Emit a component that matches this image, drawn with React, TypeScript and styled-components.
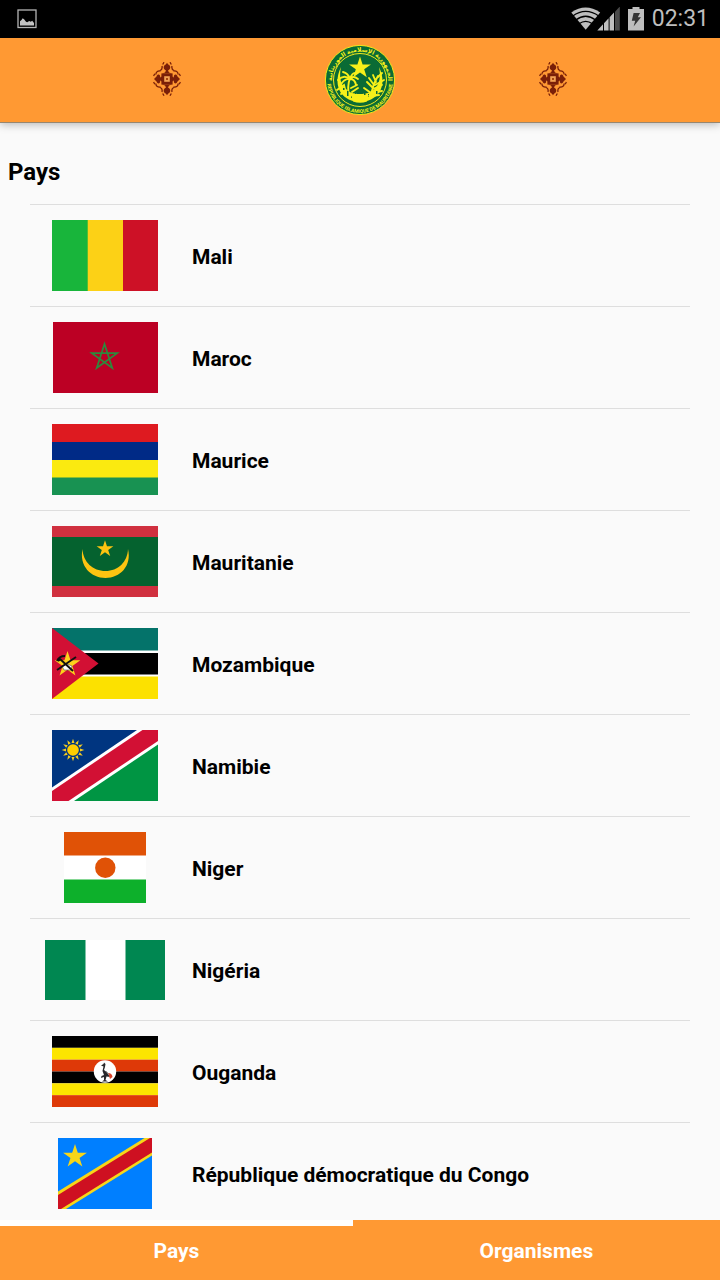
import React, { useState } from 'react';
import styled, { createGlobalStyle } from 'styled-components';

const GlobalStyle = createGlobalStyle`
  * { box-sizing: border-box; }
  body {
    margin: 0;
    background: #fafafa;
    color: #000;
    font-family: Roboto, "Noto Sans", sans-serif;
  }
`;

const Screen = styled.div`
  display: flex;
  flex-direction: column;
  height: 100vh;
`;

const StatusBar = styled.div`
  display: flex;
  flex: none;
  align-items: center;
  justify-content: space-between;
  height: 38px;
  padding: 0 11px 0 16px;
  background: #000;
  color: #bebebe;
`;

const StatusGroup = styled.div`
  display: flex;
  align-items: center;
  gap: 8px;
`;

const Clock = styled.time`
  font-size: 23px;
  line-height: 38px;
`;

const Header = styled.header`
  display: grid;
  flex: none;
  grid-template-columns: repeat(3, 1fr);
  align-items: center;
  justify-items: center;
  height: 85px;
  padding: 0 70px;
  background: #ff9933;
  border-bottom: 1px solid #97866f;
  box-shadow: 0 2px 8px rgba(0, 0, 0, 0.25);
  z-index: 1;
`;

const Content = styled.main`
  flex: 1;
  min-height: 0;
  overflow-y: auto;
  scrollbar-width: none;
`;

const Title = styled.h1`
  margin: 0;
  padding: 33px 8px 16px;
  font-size: 24px;
  line-height: 32px;
  font-weight: 700;
`;

const CountryList = styled.ul`
  margin: 0;
  padding: 0 30px;
  list-style: none;
`;

const CountryRow = styled.li`
  display: flex;
  align-items: center;
  gap: 26px;
  height: 102px;
  padding: 0 15px;
  border-top: 1px solid #dedede;
`;

const FlagSlot = styled.div`
  display: flex;
  flex: none;
  justify-content: center;
  width: 120px;
`;

const CountryName = styled.span`
  padding: 2px 0 0 1px;
  font-size: 21px;
  line-height: 28px;
  font-weight: 700;
`;

const Tabs = styled.nav`
  display: flex;
  flex: none;
  background: #ff9933;
`;

const Tab = styled.button<{ $active: boolean; $grow: number }>`
  flex: ${(p) => p.$grow} 1 0;
  height: 60px;
  padding: 0 0 4px;
  border: 0;
  border-top: 6px solid ${(p) => (p.$active ? '#fff' : '#ff9933')};
  background: #ff9933;
  color: #fff;
  font: 700 21px/28px Roboto, "Noto Sans", sans-serif;
  cursor: pointer;
`;

const Drawing = styled.svg`
  display: block;
  flex: none;
`;

const starPoints = (cx: number, cy: number, r: number, inner = 0.382) =>
  Array.from({ length: 10 }, (_, i) => {
    const a = (i * Math.PI) / 5 - Math.PI / 2;
    const d = i % 2 ? r * inner : r;
    return `${(cx + d * Math.cos(a)).toFixed(2)},${(cy + d * Math.sin(a)).toFixed(2)}`;
  }).join(' ');

const PictureIcon = () => (
  <Drawing width="22" height="22" viewBox="0 0 22 22" aria-hidden="true">
    <rect x="2" y="2" width="18" height="17.5" fill="none" stroke="#b4b4b4" strokeWidth="1.3" />
    <path d="M4 17.5v-4.2l1.5-1.2 1.2-1.8 1.6 1.2 1.7 2.2 1.2.6 2-1.2 1.6.6 1.4-1 1.8 2.4v2.4z" fill="#c4c4c4" />
  </Drawing>
);

const NetworkIcon = () => (
  <Drawing width="49" height="24" viewBox="0 0 49 24" aria-hidden="true">
    <path d="M.3 5.400Q14.500-4.400 29.200 5.400L14.700 22.800z" fill="#bebebe" />
    <g fill="none" stroke="#000" strokeWidth="1.400">
      <path d="M1.500 9.200Q14.700-.4 28 9.200" />
      <path d="M4.800 13Q14.700 5.400 24.600 13" />
      <path d="M8 16.800Q14.700 12 21.400 16.800" />
    </g>
    <path d="M26.300 23.500 32 17.300V23.500zM33 23.500v-7.300l4.600-5V23.500zM38.600 23.500V10.200l4.400-4.800v18.100z" fill="#bebebe" />
    <path d="M44 23.500V4.800L48.800-.5v24z" fill="#4b4b4b" />
  </Drawing>
);

const BatteryIcon = () => (
  <Drawing width="16" height="24" viewBox="0 0 16 24" aria-hidden="true">
    <path d="M4.500 0h7v2H16V23.500H0V2h4.500z" fill="#bebebe" />
    <path d="M5.600 6H12L9.800 10.300H13L5.600 19.400 7.200 13.800H3.800z" fill="#333" />
  </Drawing>
);

const Ornament = () => (
  <Drawing width="30" height="36" viewBox="-15 -18 30 36" aria-hidden="true">
    <g fill="#7a1f08" stroke="#7a1f08">
      {[0, 180].map((r) => (
        <g key={r} transform={`translate(0 -1) rotate(${r})`}>
          <path d="M-5-5.500-2-6.500-1-8.500C-4.500-10-3.500-14-1.200-14.500L0-16.300 1.200-14.500C3.500-14 4.500-10 1-8.500L2-6.500 5-5.500z" stroke="none" />
          <path d="M-3-16.800-4.300-14.500M3-16.800 4.300-14.500M-5-13C-4.500-10.500-5.500-9-7-8.500M5-13C4.500-10.500 5.500-9 7-8.500" fill="none" strokeWidth="1.300" />
        </g>
      ))}
      {[90, 270].map((r) => (
        <g key={r} transform={`translate(0 -1) rotate(${r})`}>
          <path d="M-2.500-5-1.500-6.800C-5-6.500-5.500-9.500-2.500-10.500L0-13 2.500-10.500C5.500-9.500 5-6.500 1.500-6.800L2.500-5z" stroke="none" />
          <path d="M-3-13.400-5.200-12.200M3-13.400 5.200-12.200M-4.500-11.200C-7.500-11-8.500-9-8-6.500M4.500-11.200C7.500-11 8.500-9 8-6.500" fill="none" strokeWidth="1.300" />
        </g>
      ))}
    </g>
    <rect x="-4.200" y="-5.200" width="8.400" height="8.400" fill="#f2a154" stroke="#7a1f08" strokeWidth="2.800" />
    <rect x="-1" y="-2" width="2" height="2" fill="#a8480f" />
  </Drawing>
);

const SealText = styled.text`
  fill: #f6f01a;
  font-family: Roboto, "DejaVu Sans", sans-serif;
  font-weight: 700;
`;

const Emblem = () => (
  <Drawing width="72" height="72" viewBox="0 0 72 72" role="img" aria-label="République Islamique de Mauritanie">
    <defs>
      <path id="seal-top" d="M10 46A28 28 0 1 1 62 46" />
      <path id="seal-bottom" d="M4.100 27.500A33 33 0 1 0 67.900 27.500" />
    </defs>
    <circle cx="36" cy="36" r="34.600" fill="#0a6b35" stroke="#f0e81c" strokeWidth="1" />
    <SealText fontSize="6" textAnchor="middle">
      <textPath href="#seal-top" startOffset="50%">الجمهورية الإسلامية الموريتانية</textPath>
    </SealText>
    <SealText fontSize="5" textAnchor="middle">
      <textPath href="#seal-bottom" startOffset="50%">REPUBLIQUE ISLAMIQUE DE MAURITANIE</textPath>
    </SealText>
    <circle cx="36" cy="36" r="26.500" fill="none" stroke="#f0e81c" strokeWidth="1" />
    <path d="M17 23C7 44 20 58 36 58S65 44 55 23C59 42 49 50 36 50S13 42 17 23z" fill="#f6f01a" />
    <polygon points={starPoints(36, 24, 11.500)} fill="#f6f01a" />
    <g fill="none" stroke="#f6f01a" strokeWidth="1.900" strokeLinecap="round">
      <path d="M25 52Q23 42 26 34M26 35Q20 30 14 36M26 35Q20 34 16 42M26 35Q29 31 34 35M26 35Q31 35 32 41M26 35Q24 29 19 28M26 35Q28 29 31 29M13 46 20 41 22 49M27 44 33 41M28 48 34 44M17 50 22 46" />
      <path d="M47 53Q48 42 54 32M49 44 43 38M50 41 45 34M52 38 49 31M49 45 58 41M51 41 60 36M48 49 58 47M47 49 40 44M54 33 58 29M47 52 55 51" />
    </g>
    <g fill="#0a6b35">
      <path d="M23 47h1.500v5H23zM31 47h1v3h-1zM40 48h1.500v3H40zM44 50h1v3h-1zM19 44h1.500v2H19zM52 47h1.500v3H52zM27 52h1v2h-1z" />
    </g>
    <path d="M27 51Q36 54 45 51L43 57.500Q36 60 29 57.500z" fill="#f6f01a" />
  </Drawing>
);

type FlagProps = { width?: number; height?: number; label: string; children: React.ReactNode };

const Flag = ({ width = 106, height = 71, label, children }: FlagProps) => (
  <Drawing width={width} height={height} viewBox={`0 0 ${width} ${height}`} role="img" aria-label={`Drapeau : ${label}`}>
    {children}
  </Drawing>
);

const MaliFlag = () => (
  <Flag label="Mali">
    <rect width="106" height="71" fill="#fcd116" />
    <rect width="35.700" height="71" fill="#18b53b" />
    <rect x="71" width="35" height="71" fill="#cd1126" />
  </Flag>
);

const MarocFlag = () => (
  <Flag width={105} label="Maroc">
    <rect width="105" height="71" fill="#bc0024" />
    <path d="M51.500 22 59.300 46 38.800 31.200H64.200L43.700 46z" fill="none" stroke="#2c8a3c" strokeWidth="1.700" />
  </Flag>
);

const MauriceFlag = () => (
  <Flag label="Maurice">
    <rect width="106" height="18" fill="#de1a20" />
    <rect y="18" width="106" height="18" fill="#002a86" />
    <rect y="36" width="106" height="18" fill="#faea10" />
    <rect y="53.500" width="106" height="17.500" fill="#189252" />
  </Flag>
);

const MauritanieFlag = () => (
  <Flag label="Mauritanie">
    <rect width="106" height="71" fill="#d0303f" />
    <rect y="11" width="106" height="49" fill="#05622f" />
    <path d="M30.500 23C27 40 39 52 53.500 52S80 40 76 23C75.500 36 66 45 53.500 45S31 36 30.500 23z" fill="#fdc411" />
    <polygon points={starPoints(53, 23, 8.800)} fill="#fdc411" />
  </Flag>
);

const MozambiqueFlag = () => (
  <Flag label="Mozambique">
    <rect width="106" height="71" fill="#fff" />
    <rect width="106" height="22.500" fill="#04736a" />
    <rect y="25" width="106" height="21.500" fill="#000" />
    <rect y="48.500" width="106" height="22.500" fill="#fce100" />
    <path d="M0 0 46.500 35.500 0 71z" fill="#d21034" />
    <polygon points={starPoints(15.500, 36.500, 13.500)} fill="#fcd21c" />
    <path d="M10 38 15 36 20 38 19 42 12 42z" fill="#fff" stroke="#555" strokeWidth=".6" />
    <path d="M5 42 24 29M8 31 21 43M5 33Q7 28 13 28M6 33 9 31" fill="none" stroke="#111" strokeWidth="1.900" />
  </Flag>
);

const NamibieFlag = () => (
  <Flag label="Namibie">
    <rect width="106" height="71" fill="#009543" />
    <path d="M0 0H106L0 71z" fill="#003580" />
    <path d="M0 57.500 85 0H106V14.500L22 71H0z" fill="#fff" />
    <path d="M0 61 90.500 0H106V11L16.500 71H0z" fill="#d21034" />
    {Array.from({ length: 12 }, (_, i) => (
      <path key={i} d="M-1.500-7 0-11.300 1.500-7z" transform={`translate(21 20) rotate(${i * 30})`} fill="#f5cd20" />
    ))}
    <circle cx="21" cy="20" r="5.800" fill="#ffce00" />
  </Flag>
);

const NigerFlag = () => (
  <Flag width={82} label="Niger">
    <rect width="82" height="71" fill="#fff" />
    <rect width="82" height="23.500" fill="#e05206" />
    <rect y="47.500" width="82" height="23.500" fill="#0db02b" />
    <circle cx="41.300" cy="35.700" r="10.200" fill="#e05206" />
  </Flag>
);

const NigeriaFlag = () => (
  <Flag width={120} height={60} label="Nigéria">
    <rect width="120" height="60" fill="#fff" />
    <rect width="40.500" height="60" fill="#008751" />
    <rect x="80.500" width="39.500" height="60" fill="#008751" />
  </Flag>
);

const OugandaFlag = () => (
  <Flag label="Ouganda">
    {['#000', '#fce500', '#de3908', '#000', '#fce500', '#de3908'].map((c, i) => (
      <rect key={i} y={i * 11.833} width="106" height="11.833" fill={c} />
    ))}
    <circle cx="53" cy="35.500" r="11.200" fill="#fff" />
    <path d="M49 29.500 51.500 28 52 26.500 53.500 28 53 31 52 34 56 37 58 41 54.500 40.500 53.500 44 56 45.500H50L52 44V41L49 42 49.500 40 52 39 50.500 35 51.500 30.500z" fill="#27272b" />
    <path d="M56 37Q60 37 60.500 41L58 43z" fill="#d94228" />
    <path d="M54 35 57 39" stroke="#999" strokeWidth="1" />
  </Flag>
);

const CongoFlag = () => (
  <Flag width={94} label="République démocratique du Congo">
    <rect width="94" height="71" fill="#007fff" />
    <path d="M0 53.500 86.500 0H94V17.500L8 71H0z" fill="#f7d618" />
    <path d="M0 57 92 0H94V14.500L3 71H0z" fill="#ce1021" />
    <polygon points={starPoints(17, 18.500, 12.500)} fill="#f7d618" />
  </Flag>
);

const countries = [
  { name: 'Mali', Picture: MaliFlag },
  { name: 'Maroc', Picture: MarocFlag },
  { name: 'Maurice', Picture: MauriceFlag },
  { name: 'Mauritanie', Picture: MauritanieFlag },
  { name: 'Mozambique', Picture: MozambiqueFlag },
  { name: 'Namibie', Picture: NamibieFlag },
  { name: 'Niger', Picture: NigerFlag },
  { name: 'Nigéria', Picture: NigeriaFlag },
  { name: 'Ouganda', Picture: OugandaFlag },
  { name: 'République démocratique du Congo', Picture: CongoFlag },
];

const tabs = [
  { label: 'Pays', grow: 49 },
  { label: 'Organismes', grow: 51 },
];

export default function App() {
  const [active, setActive] = useState('Pays');

  return (
    <>
      <GlobalStyle />
      <Screen>
        <StatusBar>
          <PictureIcon />
          <StatusGroup>
            <NetworkIcon />
            <BatteryIcon />
            <Clock>02:31</Clock>
          </StatusGroup>
        </StatusBar>
        <Header>
          <Ornament />
          <Emblem />
          <Ornament />
        </Header>
        <Content>
          <Title>Pays</Title>
          <CountryList>
            {countries.map(({ name, Picture }) => (
              <CountryRow key={name}>
                <FlagSlot>
                  <Picture />
                </FlagSlot>
                <CountryName>{name}</CountryName>
              </CountryRow>
            ))}
          </CountryList>
        </Content>
        <Tabs>
          {tabs.map(({ label, grow }) => (
            <Tab
              key={label}
              type="button"
              $grow={grow}
              $active={active === label}
              aria-pressed={active === label}
              onClick={() => setActive(label)}
            >
              {label}
            </Tab>
          ))}
        </Tabs>
      </Screen>
    </>
  );
}
